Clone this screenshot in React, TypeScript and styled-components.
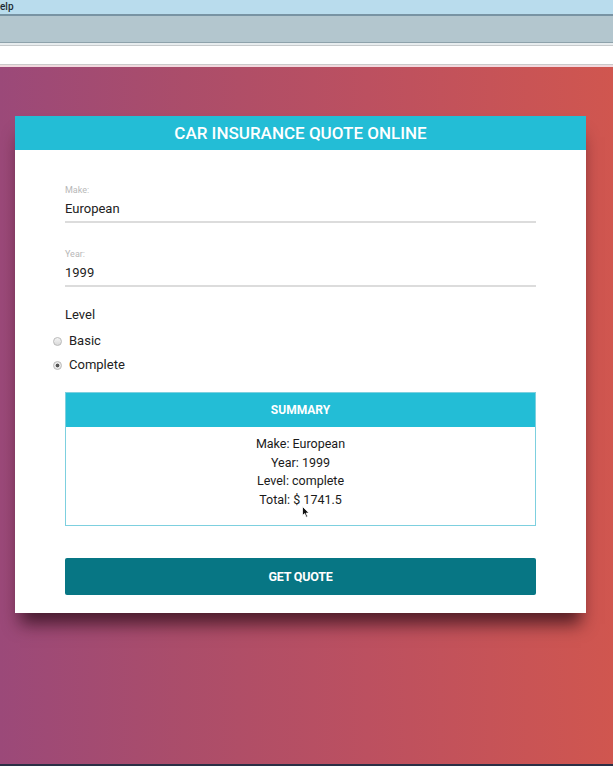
import React from 'react';
import styled, { createGlobalStyle } from 'styled-components';

const GlobalStyle = createGlobalStyle`
  html, body {
    margin: 0;
    padding: 0;
  }
  body {
    font-family: Roboto, 'Liberation Sans', sans-serif;
    color: #222;
  }
  * {
    box-sizing: border-box;
  }
`;

const Page = styled.div`
  width: 613px;
  height: 766px;
  display: flex;
  flex-direction: column;
  overflow: hidden;
`;

const MenuBar = styled.div`
  height: 16px;
  background: #b9dced;
  border-bottom: 2px solid #7893a3;
  font-size: 10px;
  font-weight: 500;
  line-height: 13px;
  color: #1d2a33;
  padding-left: 0;
`;

const ToolBar = styled.div`
  height: 27px;
  background: #b3c6ce;
  border-bottom: 1px solid #8ea2ab;
`;

const TabStrip = styled.div`
  height: 3px;
  background: #e7ecee;
  border-bottom: 1px solid #c7cacc;
`;

const AddressBar = styled.div`
  height: 19px;
  background: #fff;
  border-bottom: 1px solid #c9c9c9;
`;

const Stage = styled.main`
  flex: 1;
  position: relative;
  padding: 49px 0 0 15px;
  background: linear-gradient(90deg, #9b4979 0%, #ab4d6a 30%, #bc5060 60%, #d0564f 100%);
  border-top: 2px solid #f0d9de;
  border-bottom: 2px solid #2b2f45;
`;

const Card = styled.section`
  width: 571px;
  background: #fff;
  box-shadow: 0 16px 16px -5px rgba(35, 8, 18, 0.7);
`;

const CardHeader = styled.h1`
  margin: 0;
  height: 34px;
  background: #23bdd6;
  color: #fff;
  font-size: 17px;
  font-weight: 500;
  line-height: 34px;
  text-align: center;
`;

const CardBody = styled.form`
  padding: 34px 50px 18px;
  display: flex;
  flex-direction: column;
`;

const Fields = styled.div`
  display: flex;
  flex-direction: column;
  gap: 25px;
`;

const Field = styled.div`
  display: flex;
  flex-direction: column;
`;

const FieldLabel = styled.label`
  font-size: 9px;
  line-height: 12px;
  color: #b8b8b8;
`;

const FieldValue = styled.div`
  margin-top: 3px;
  padding-bottom: 2px;
  font-size: 13px;
  line-height: 20px;
  color: #222;
  border-bottom: 2px solid #dcdcdc;
`;

const LevelGroup = styled.fieldset`
  margin: 19px 0 0;
  padding: 0;
  border: none;
`;

const LevelTitle = styled.legend`
  padding: 0;
  font-size: 13px;
  line-height: 18px;
  margin-bottom: 4px;
`;

const RadioRow = styled.label`
  display: flex;
  align-items: center;
  gap: 7px;
  margin-left: -12px;
  height: 24px;
  font-size: 13px;
`;

const RadioDot = styled.span<{ $checked?: boolean }>`
  width: 9px;
  height: 9px;
  margin-top: 2px;
  border-radius: 50%;
  border: 1px solid #b9b9b9;
  background: ${(p) =>
    p.$checked
      ? 'radial-gradient(circle, #555 0 1.6px, #e9e9e9 2.2px)'
      : 'linear-gradient(#f4f4f4, #d9d9d9)'};
`;

const Summary = styled.div`
  margin-top: 16px;
  border: 1px solid #7dd0df;
`;

const SummaryHeader = styled.h2`
  margin: 0;
  height: 34px;
  background: #23bdd6;
  color: #fff;
  font-size: 12px;
  font-weight: 700;
  line-height: 34px;
  text-align: center;
`;

const SummaryBody = styled.div`
  position: relative;
  padding: 8px 0 15px;
  text-align: center;
  font-size: 12.5px;
  line-height: 18.7px;
  color: #1a1a1a;
`;

const Cursor = styled.svg`
  position: absolute;
  left: 236px;
  top: 79px;
`;

const QuoteButton = styled.button`
  margin-top: 32px;
  height: 37px;
  border: none;
  border-radius: 2px;
  background: #077684;
  color: #fff;
  font-family: Roboto, 'Liberation Sans', sans-serif;
  font-size: 12.5px;
  font-weight: 700;
  letter-spacing: -0.2px;
`;

const App = () => {
  return (
    <Page>
      <GlobalStyle />
      <MenuBar>elp</MenuBar>
      <ToolBar />
      <TabStrip />
      <AddressBar />
      <Stage>
        <Card>
          <CardHeader>CAR INSURANCE QUOTE ONLINE</CardHeader>
          <CardBody>
            <Fields>
              <Field>
                <FieldLabel>Make:</FieldLabel>
                <FieldValue>European</FieldValue>
              </Field>
              <Field>
                <FieldLabel>Year:</FieldLabel>
                <FieldValue>1999</FieldValue>
              </Field>
            </Fields>
            <LevelGroup>
              <LevelTitle>Level</LevelTitle>
              <RadioRow>
                <RadioDot />
                Basic
              </RadioRow>
              <RadioRow>
                <RadioDot $checked />
                Complete
              </RadioRow>
            </LevelGroup>
            <Summary>
              <SummaryHeader>SUMMARY</SummaryHeader>
              <SummaryBody>
                <div>Make: European</div>
                <div>Year: 1999</div>
                <div>Level: complete</div>
                <div>Total: $ 1741.5</div>
                <Cursor width="8" height="12" viewBox="0 0 8 12">
                  <path d="M0.5 0.5 L0.5 9.5 L2.6 7.6 L4.2 11.2 L5.6 10.6 L4.1 7.1 L7 7.1 Z" fill="#111" stroke="#fff" strokeWidth="0.8" />
                </Cursor>
              </SummaryBody>
            </Summary>
            <QuoteButton type="button">GET QUOTE</QuoteButton>
          </CardBody>
        </Card>
      </Stage>
    </Page>
  );
};

export default App;
